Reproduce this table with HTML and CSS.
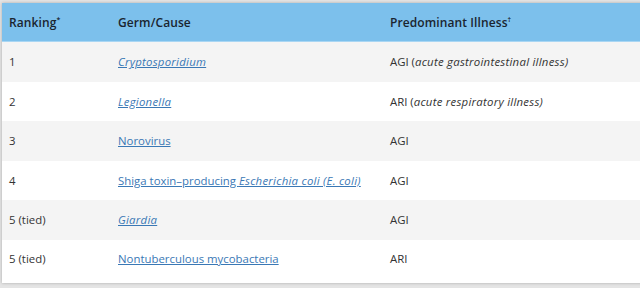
FILE: index.html
```html
<!DOCTYPE html>
<html lang="en">
<head>
<meta charset="utf-8">
<link rel="stylesheet" href="styles.css">
</head>
<body>
<div class="frame">
<table class="germs">
  <thead>
    <tr>
      <th class="c1">Ranking<sup>*</sup></th>
      <th class="c2">Germ/Cause</th>
      <th class="c3">Predominant Illness<sup>†</sup></th>
    </tr>
  </thead>
  <tbody>
    <tr><td>1</td><td><a href="#"><em>Cryptosporidium</em></a></td><td>AGI (<em>acute gastrointestinal illness)</em></td></tr>
    <tr><td>2</td><td><a href="#"><em>Legionella</em></a></td><td>ARI (<em>acute respiratory illness)</em></td></tr>
    <tr><td>3</td><td><a href="#">Norovirus</a></td><td>AGI</td></tr>
    <tr><td>4</td><td><a href="#">Shiga toxin–producing <em>Escherichia coli (E. coli)</em></a></td><td>AGI</td></tr>
    <tr><td>5 (tied)</td><td><a href="#"><em>Giardia</em></a></td><td>AGI</td></tr>
    <tr class="last"><td>5 (tied)</td><td><a href="#">Nontuberculous mycobacteria</a></td><td>ARI</td></tr>
  </tbody>
</table>
</div>
</body>
</html>
```
FILE: styles.css
```css
html, body {
  margin: 0;
  padding: 0;
  width: 640px;
  height: 288px;
  overflow: hidden;
  background: #e4e4e4;
}
.frame {
  margin: 3px 0 0 2px;
  width: 650px;
  background: #fff;
  box-shadow: 0 0 3px rgba(0,0,0,0.25);
}
.germs {
  border-collapse: collapse;
  width: 650px;
  font-family: "Open Sans", "Noto Sans", sans-serif;
  font-size: 11.4px;
  color: #333;
}
.germs th {
  background: #7cc0ec;
  text-align: left;
  font-weight: 600;
  font-size: 12px;
  letter-spacing: 0.1px;
  color: #1a2530;
  height: 38px;
  padding: 0 7px;
  border-bottom: 1px solid #a9d6f3;
}
.germs sup {
  font-size: 7px;
  vertical-align: 5px;
  line-height: 0;
}
.germs em { letter-spacing: 0.25px; }
.c1 { width: 95px; }
.c2 { width: 258px; }
.germs td {
  height: 39.5px;
  padding: 0 7px;
  vertical-align: middle;
}
.germs tbody tr:nth-child(odd) td { background: #f4f4f4; }
.germs tbody tr.last td { height: 43px; vertical-align: middle; padding-bottom: 5px; box-sizing: border-box; }
.germs a {
  color: #3a78b5;
  text-decoration: underline;
}
```
